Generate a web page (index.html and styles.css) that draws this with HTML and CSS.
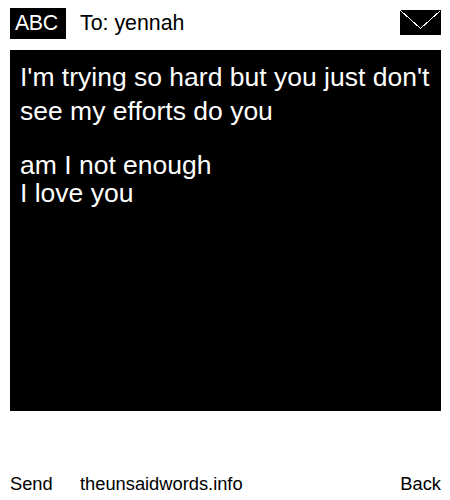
FILE: index.html
```html
<!DOCTYPE html>
<html lang="en">
<head>
<meta charset="utf-8">
<title>The Unsaid Words</title>
<link rel="stylesheet" href="styles.css">
</head>
<body>
<div class="page">
  <header class="top">
    <span class="abc">ABC</span>
    <span class="to">To: yennah</span>
    <svg class="mail" width="41" height="25" viewBox="0 0 41 25">
      <rect width="41" height="25" fill="#000"/>
      <path d="M0.5 0.5 L20.5 18.5 L40.5 0.5" fill="none" stroke="#fff" stroke-width="1" shape-rendering="crispEdges"/>
    </svg>
  </header>
  <main class="msg">
    <p class="lead">I'm trying so hard but you just don't see my efforts do you</p>
    <p class="rest">am I not enough<br>I love you</p>
  </main>
  <footer class="bottom">
    <span class="send">Send</span>
    <span class="site">theunsaidwords.info</span>
    <span class="back">Back</span>
  </footer>
</div>
</body>
</html>
```
FILE: styles.css
```css
html, body { margin: 0; padding: 0; background: #fff; }
body { font-family: "Liberation Sans", Arial, sans-serif; color: #000; }
.page { width: 450px; height: 500px; box-sizing: border-box; padding: 8px 9px 0 10px; display: flex; flex-direction: column; }
.top { display: flex; align-items: flex-start; height: 31px; }
.abc { background: #000; color: #fff; font-size: 21.33px; letter-spacing: -0.4px; line-height: 31px; width: 56px; box-sizing: border-box; padding-left: 5px; }
.to { font-size: 21.33px; line-height: 31px; margin-left: 14px; flex: 1; }
.mail { display: block; margin-top: 2px; }
.msg { background: #000; color: #fff; height: 361px; margin-top: 11px; padding: 10px 10px 0; box-sizing: border-box; font-size: 26.5px; }
.lead { margin: 0 0 23px; line-height: 34px; }
.rest { margin: 0; line-height: 28px; }
.bottom { display: flex; font-size: 18.3px; line-height: 21px; margin-top: 62px; }
.send { width: 70px; }
.site { flex: 1; }
```
